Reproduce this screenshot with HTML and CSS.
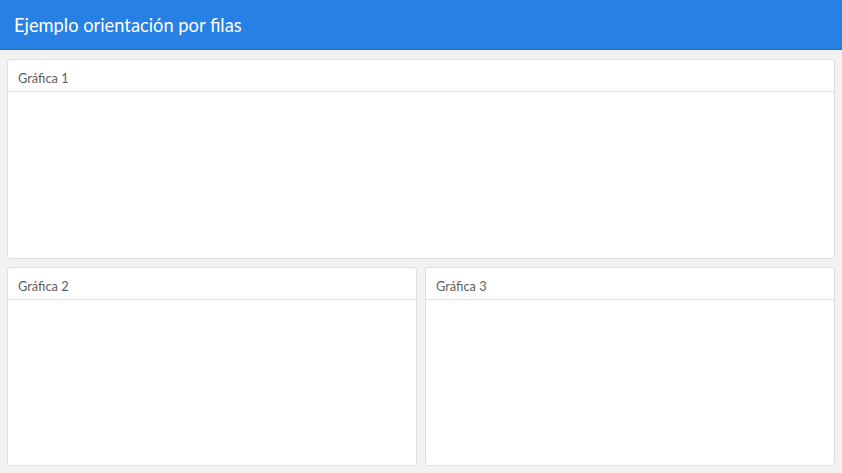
FILE: index.html
```html
<!DOCTYPE html>
<html lang="es">
<head>
<meta charset="utf-8">
<title>Ejemplo orientación por filas</title>
<link rel="stylesheet" href="styles.css">
</head>
<body>
<header class="navbar">
  <span class="brand">Ejemplo orientación por filas</span>
</header>
<main class="dashboard">
  <section class="row row-top">
    <div class="card">
      <div class="card-title">Gráfica 1</div>
      <div class="card-body"></div>
    </div>
  </section>
  <section class="row row-bottom">
    <div class="card">
      <div class="card-title">Gráfica 2</div>
      <div class="card-body"></div>
    </div>
    <div class="card">
      <div class="card-title">Gráfica 3</div>
      <div class="card-body"></div>
    </div>
  </section>
</main>
</body>
</html>
```
FILE: styles.css
```css
* { box-sizing: border-box; }
html, body { height: 100%; }
body {
  margin: 0;
  background: #f2f2f2;
  font-family: "Lato", "Open Sans", sans-serif;
  display: flex;
  flex-direction: column;
}
.navbar {
  height: 50px;
  flex: 0 0 auto;
  background: #2780e3;
  border-bottom: 1px solid #1a6fd0;
  display: flex;
  align-items: center;
  padding: 1px 14px 0;
}
.brand {
  color: #fff;
  font-size: 18.3px;
  letter-spacing: 0;
}
.dashboard {
  flex: 1 1 auto;
  display: flex;
  flex-direction: column;
  gap: 8px;
  padding: 9px 7px 7px 7px;
  min-height: 0;
}
.row {
  flex: 1 1 0;
  display: flex;
  gap: 8px;
  min-height: 0;
}
.row-top { flex-grow: 1.005; }
.card {
  flex: 1 1 0;
  background: #fff;
  border: 1px solid #dedede;
  border-radius: 3px;
  display: flex;
  flex-direction: column;
}
.card-title {
  height: 32px;
  flex: 0 0 auto;
  border-bottom: 1px solid #dedede;
  padding: 10px 10px 0;
  font-size: 12.8px;
  color: #606060;
}
.card-body { flex: 1 1 auto; }
```
